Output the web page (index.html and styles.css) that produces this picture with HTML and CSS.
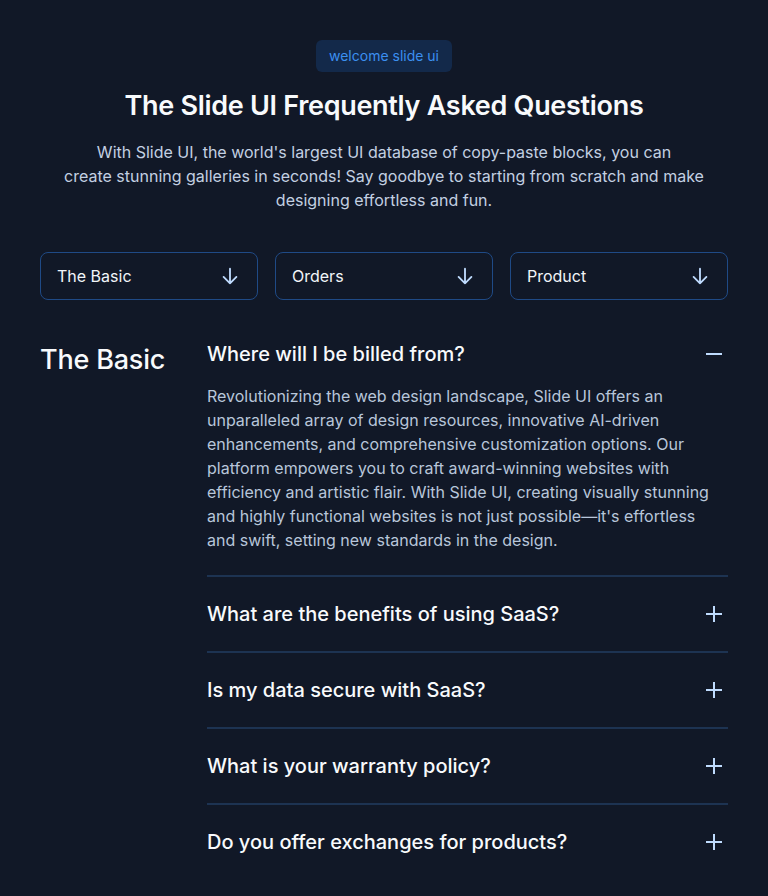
FILE: index.html
```html
<!DOCTYPE html>
<html lang="en">
<head>
<meta charset="utf-8">
<title>FAQ</title>
<link rel="stylesheet" href="styles.css">
</head>
<body>
<main class="page">
  <header class="hero">
    <span class="badge">welcome slide ui</span>
    <h1 class="title">The Slide UI Frequently Asked Questions</h1>
    <p class="lead">With Slide UI, the world's largest UI database of copy-paste blocks, you can<br>create stunning galleries in seconds! Say goodbye to starting from scratch and make designing effortless and fun.</p>
  </header>

  <nav class="tabs">
    <button class="tab"><span>The Basic</span>
      <svg viewBox="0 0 24 24" class="tab-icon"><path d="M12 4v16M5 13l7 7 7-7"/></svg>
    </button>
    <button class="tab"><span>Orders</span>
      <svg viewBox="0 0 24 24" class="tab-icon"><path d="M12 4v16M5 13l7 7 7-7"/></svg>
    </button>
    <button class="tab"><span>Product</span>
      <svg viewBox="0 0 24 24" class="tab-icon"><path d="M12 4v16M5 13l7 7 7-7"/></svg>
    </button>
  </nav>

  <section class="faq">
    <h2 class="faq-heading">The Basic</h2>
    <div class="faq-list">
      <div class="item item-open">
        <div class="question"><span>Where will I be billed from?</span>
          <svg viewBox="0 0 24 24" class="q-icon"><path d="M4 12h16"/></svg>
        </div>
        <p class="answer">Revolutionizing the web design landscape, Slide UI offers an unparalleled array of design resources, innovative AI-driven enhancements, and comprehensive customization options. Our platform empowers you to craft award-winning websites with efficiency and artistic flair. With Slide UI, creating visually stunning and highly functional websites is not just possible—it's effortless and swift, setting new standards in the design.</p>
      </div>
      <div class="item">
        <div class="question"><span>What are the benefits of using SaaS?</span>
          <svg viewBox="0 0 24 24" class="q-icon"><path d="M4 12h16M12 4v16"/></svg>
        </div>
      </div>
      <div class="item">
        <div class="question"><span>Is my data secure with SaaS?</span>
          <svg viewBox="0 0 24 24" class="q-icon"><path d="M4 12h16M12 4v16"/></svg>
        </div>
      </div>
      <div class="item">
        <div class="question"><span>What is your warranty policy?</span>
          <svg viewBox="0 0 24 24" class="q-icon"><path d="M4 12h16M12 4v16"/></svg>
        </div>
      </div>
      <div class="item">
        <div class="question"><span>Do you offer exchanges for products?</span>
          <svg viewBox="0 0 24 24" class="q-icon"><path d="M4 12h16M12 4v16"/></svg>
        </div>
      </div>
    </div>
  </section>
</main>
</body>
</html>
```

FILE: styles.css
```css
* { box-sizing: border-box; }
html, body { margin: 0; padding: 0; }
body {
  background: #111827;
  font-family: Inter, "Noto Sans", sans-serif;
  color: #f8fafc;
}
.page {
  padding: 40px 40px 40px;
}
.hero {
  display: flex;
  flex-direction: column;
  align-items: center;
  text-align: center;
}
.badge {
  display: inline-block;
  background: #13294a;
  color: #3b8ff0;
  font-size: 14px;
  line-height: 20px;
  padding: 6px 13px;
  border-radius: 6px;
}
.title {
  margin: 16px 0 0;
  font-size: 27px;
  line-height: 36px;
  font-weight: 600;
  color: #f8fafc;
  letter-spacing: -0.3px;
}
.lead {
  margin: 16px 0 0;
  max-width: 660px;
  font-size: 16px;
  line-height: 24px;
  color: #c3d0e2;
}
.tabs {
  margin-top: 40px;
  display: grid;
  grid-template-columns: repeat(3, 1fr);
  gap: 17px;
}
.tab {
  display: flex;
  align-items: center;
  justify-content: space-between;
  height: 48px;
  padding: 0 16px;
  background: transparent;
  border: 1px solid #1f4a86;
  border-radius: 8px;
  color: #f1f5f9;
  font-family: inherit;
  font-size: 16px;
  cursor: pointer;
}
.tab-icon {
  width: 22px;
  height: 22px;
  fill: none;
  stroke: #bfdbfe;
  stroke-width: 2;
  stroke-linecap: round;
  stroke-linejoin: round;
}
.faq {
  margin-top: 40px;
  display: grid;
  grid-template-columns: 1fr 521px;
}
.faq-heading {
  margin: 2px 0 0;
  font-size: 27px;
  line-height: 36px;
  font-weight: 500;
  color: #f8fafc;
  letter-spacing: -0.2px;
}
.item {
  border-top: 2px solid #1d3352;
  padding: 23px 0;
}
.item-open {
  border-top: none;
  padding: 0 0 23px;
}
.question {
  display: flex;
  align-items: center;
  justify-content: space-between;
  font-size: 20px;
  line-height: 28px;
  font-weight: 500;
  color: #f8fafc;
}
.q-icon {
  width: 24px;
  height: 24px;
  margin-right: 2px;
  fill: none;
  stroke: #bfdbfe;
  stroke-width: 2;
}
.answer {
  margin: 16px 0 0;
  padding-right: 12px;
  font-size: 16px;
  line-height: 24px;
  color: #b8c6da;
}
```
